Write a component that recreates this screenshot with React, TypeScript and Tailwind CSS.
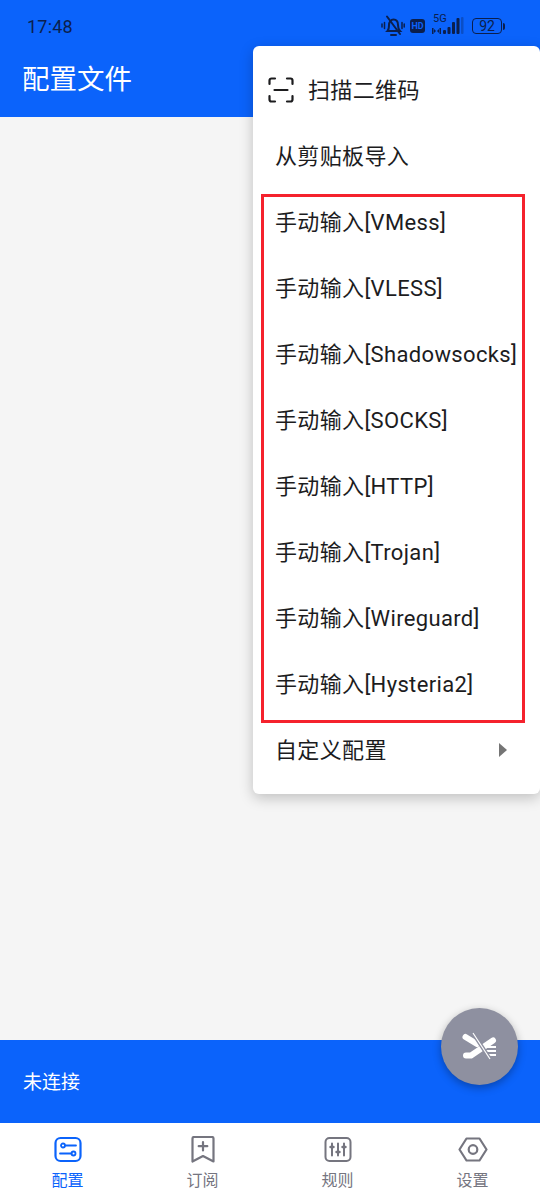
import React from "react";

const F = "font-['Roboto','Noto_Sans_CJK_SC',sans-serif]";

const items = ["从剪贴板导入", "手动输入[VMess]", "手动输入[VLESS]", "手动输入[Shadowsocks]", "手动输入[SOCKS]", "手动输入[HTTP]", "手动输入[Trojan]", "手动输入[Wireguard]", "手动输入[Hysteria2]"];

function StatusIcons() {
  const c = "#0b1f4d";
  return (
    <div className="flex items-center mr-[35px]">
      <svg width="24" height="26" viewBox="0 0 24 26" fill="none" stroke={c} strokeWidth="2" strokeLinecap="round">
        <path d="M6.500 18c1.500-1.500 1.500-3.500 1.500-6 0-3 2-5.500 4.500-5.500 3 0 4.500 2.500 4.500 5.500 0 2.500.5 4.500 2 6z" />
        <path d="M10 22h5M6 3.500L19 21" />
        <path d="M3.500 9.500v6M1 11v3M21 9.500v6M23.200 11v3" strokeWidth="1.500" />
      </svg>
      <div className="ml-[5px] w-[15px] h-[14px] rounded-[3px] bg-[#0b1f4d] flex items-center justify-center text-[9px] leading-none font-bold text-[#0b63fb] font-['Roboto',sans-serif]">HD</div>
      <div className="ml-[7px] w-[32px] h-[20px] relative">
        <span className="absolute left-[1px] top-[-3px] text-[11px] leading-[12px] text-[#0b1f4d] font-['Roboto',sans-serif]">5G</span>
        <svg className="absolute left-0 top-0" width="32" height="20" viewBox="0 0 32 20" fill={c}>
          <rect x="0" y="12" width="1.500" height="6" />
          <path d="M2 13l2 2-2 2zM7 13l-2 2 2 2z" />
          <rect x="7.500" y="12" width="1.500" height="6" />
          <rect x="11" y="14" width="3" height="4" rx="1" />
          <rect x="15.500" y="11" width="3" height="7" rx="1" />
          <rect x="20" y="6" width="3" height="12" rx="1" />
          <rect x="24.500" y="2" width="3" height="16" rx="1" />
          <rect x="29" y="1" width="2.500" height="17" rx="1" opacity="0.3" />
        </svg>
      </div>
      <div className="ml-[8px] w-[30px] h-[16px] rounded-[4px] border-[1.500px] border-[#0b1f4d] flex items-center justify-center text-[14px] leading-none text-[#0b1f4d] font-['Roboto',sans-serif]">92</div>
      <div className="ml-[1px] w-[2px] h-[7px] rounded-r-[2px] bg-[#0b1f4d]" />
    </div>
  );
}

function Tab({ label, active, children }: { label: string; active?: boolean; children: React.ReactNode }) {
  return (
    <div className="flex-1 flex flex-col items-center pt-[13px]">
      {children}
      <span className={`mt-[6px] text-[16px] leading-[22px] ${active ? "text-[#0b63fb]" : "text-[#75757f]"}`}>{label}</span>
    </div>
  );
}

export default function App() {
  return (
    <div className={`relative w-[540px] h-[1200px] overflow-hidden flex flex-col bg-[#f5f5f5] ${F}`}>
      <header className="h-[117px] bg-[#0b63fb] shrink-0">
        <div className="h-[52px] flex items-center justify-between">
          <span className="ml-[27px] pt-[2px] text-[18px] leading-none text-[#0b1f4d] tracking-[0.2px]">17:48</span>
          <StatusIcons />
        </div>
        <div className="ml-[22px] mt-[7px] text-[27.500px] leading-[41px] text-white">配置文件</div>
      </header>
      <main className="flex-1" />
      <div className="h-[83px] shrink-0 bg-[#0b63fb] flex items-center pl-[23px] pt-[3px] text-[19px] text-white">未连接</div>
      <nav className="h-[77px] shrink-0 bg-white flex">
        <Tab label="配置" active>
          <svg width="28" height="28" viewBox="0 0 28 28" fill="none" stroke="#0b63fb" strokeWidth="2.200">
            <rect x="1.500" y="2" width="25" height="23" rx="5" />
            <circle cx="9" cy="9.500" r="2" strokeWidth="1.800" />
            <path d="M11.500 9.500H22M6 17.500h11.500" strokeWidth="1.800" strokeLinecap="round" />
            <circle cx="19.500" cy="17.500" r="2" strokeWidth="1.800" />
          </svg>
        </Tab>
        <Tab label="订阅">
          <svg width="28" height="28" viewBox="0 0 28 28" fill="none" stroke="#75757f" strokeWidth="2.200" strokeLinejoin="round">
            <path d="M3.500 2.500a1.500 1.500 0 0 1 1.500-1.500h18a1.500 1.500 0 0 1 1.500 1.500V25.500L14 20 3.500 25.500z" />
            <path d="M14 6v8.500M9.700 10.200h8.600" strokeLinecap="round" />
          </svg>
        </Tab>
        <Tab label="规则">
          <svg width="28" height="28" viewBox="0 0 28 28" fill="none" stroke="#75757f" strokeWidth="2">
            <rect x="1.500" y="2" width="25" height="23" rx="4" />
            <path d="M8 7.500v12M14 7.500v12M20 7.500v12" strokeLinecap="round" />
            <path d="M6.500 11h3M12.500 16h3M18.500 11h3" strokeWidth="2.400" strokeLinecap="round" />
          </svg>
        </Tab>
        <Tab label="设置">
          <svg width="30" height="28" viewBox="0 0 30 28" fill="none" stroke="#75757f" strokeWidth="2.200" strokeLinejoin="round">
            <path d="M8.500 2.500h13L28.500 13.500l-7 11h-13L1.500 13.500z" />
            <circle cx="15" cy="13.500" r="4.300" />
          </svg>
        </Tab>
      </nav>

      <div className="absolute left-[441px] top-[1008px] w-[77px] h-[77px] rounded-full bg-[#8e90a0] shadow-[0_3px_8px_rgba(0,0,0,0.3)] flex items-center justify-center">
        <svg width="40" height="36" viewBox="0 0 40 36" fill="none">
          <path d="M5.500 8L17 15" stroke="white" strokeWidth="6" strokeLinecap="round" />
          <path d="M6 26.500h5l22-15" stroke="white" strokeWidth="6" strokeLinecap="round" strokeLinejoin="round" />
          <path d="M24 18h12M26 22h10M28 26h8" stroke="white" strokeWidth="2.200" />
          <path d="M13 4l17 26" stroke="#8e90a0" strokeWidth="4" />
          <path d="M13 4l17 26" stroke="white" strokeWidth="1.200" />
        </svg>
      </div>

      <div className="absolute left-[253px] right-0 top-[46px] rounded-[6px] bg-white shadow-[0_4px_14px_rgba(0,0,0,0.22)] py-[11px] text-[22px] text-[#1c1c1e] tracking-[0.35px]">
        <div className="h-[66px] flex items-center pl-[15px]">
          <svg width="26" height="26" viewBox="0 0 26 26" fill="none" stroke="#1c1c1e" strokeWidth="2.200" strokeLinecap="round">
            <path d="M1.500 7V3.500a2 2 0 0 1 2-2H7M19 1.500h3.500a2 2 0 0 1 2 2V7M1.500 19v3.500a2 2 0 0 0 2 2H7M19 24.500h3.500a2 2 0 0 0 2-2V19M6.500 13h13" />
          </svg>
          <span className="ml-[14px]">扫描二维码</span>
        </div>
        {items.map((t) => (
          <div key={t} className="h-[66px] flex items-center pl-[22px] whitespace-nowrap">{t}</div>
        ))}
        <div className="h-[66px] flex items-center justify-between pl-[22px] pr-[33px]">
          <span>自定义配置</span>
          <span className="w-0 h-0 border-y-[7px] border-y-transparent border-l-[8px] border-l-[#757575]" />
        </div>
      </div>

      <div className="absolute left-[261px] top-[194px] w-[264px] h-[529px] border-[3px] border-[#f5222d] pointer-events-none" />
    </div>
  );
}
